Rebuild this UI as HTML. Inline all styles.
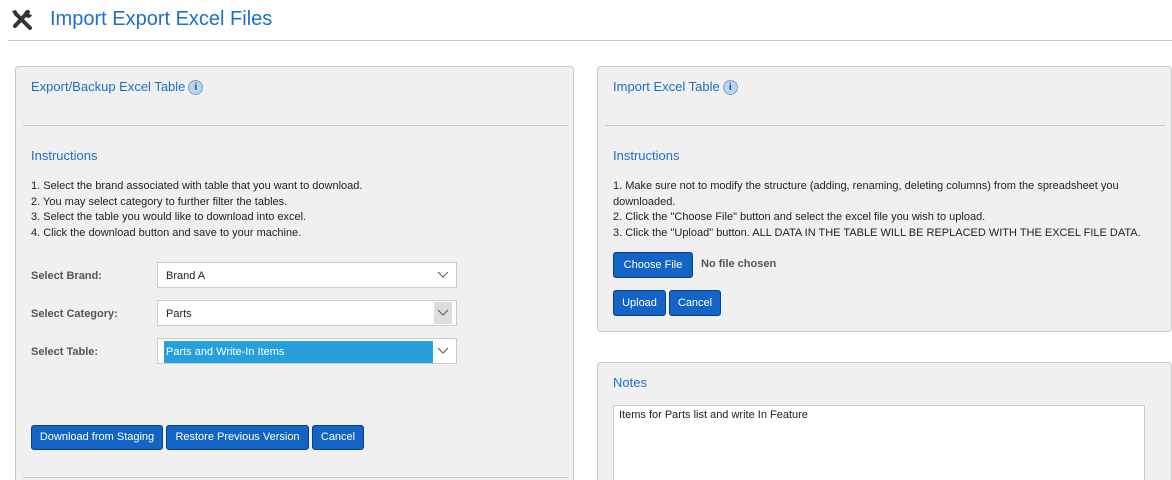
<!DOCTYPE html><html><head><style>
html,body{margin:0;width:1172px;height:480px;overflow:hidden}
body{background:#fff;font-family:"Liberation Sans",sans-serif;position:relative;font-size:11px;color:#222}
.a{position:absolute}
.h1{left:50px;top:8px;font-size:20px;color:#1e6fc7}
.hr{left:8px;top:40px;width:1164px;height:1px;background:#c8c8c8}
.panel{background:#f0f0f0;border:1px solid #c8c8c8;border-radius:4px;box-sizing:border-box}
.t{color:#1e6fc7;font-size:13px}
.line{height:1px;background:#c8c8c8}
.btn{background:#1364c4;border:1px solid #0a3f8a;border-radius:3px;color:#fff;font-size:11px;text-align:center;box-sizing:border-box}
.lbl{font-weight:bold;color:#555;font-size:11px}
.sel{background:#fff;border:1px solid #ccc;height:26px;box-sizing:border-box;width:300px;left:157px}
.txt{position:absolute;left:8px;top:7px}
.chev{position:absolute;right:7px;top:8px}
.info{display:inline-block;width:13px;height:13px;border-radius:50%;background:#bcd4ea;border:1px solid #7aa0c8;color:#1e4f8a;font-size:10px;font-weight:bold;text-align:center;line-height:13px;vertical-align:middle;margin-left:3px}
</style></head><body>
<svg class="a" style="left:10px;top:8px" width="24" height="24" viewBox="0 0 24 24"><path d="M6 6 L20 20" stroke="#333" stroke-width="4" stroke-linecap="round"/><path d="M18 4 L5 18" stroke="#333" stroke-width="4" stroke-linecap="round"/><path d="M2 3 L6 2 L8 6 L5 8 Z" fill="#333"/><path d="M17 2 A4 4 0 1 0 22 7 L19 6 Z" fill="#333"/></svg>
<div class="a h1">Import Export Excel Files</div>
<div class="a hr"></div>

<div class="a panel" style="left:15px;top:66px;width:559px;height:430px"></div>
<div class="a t" style="left:31px;top:79px">Export/Backup Excel Table<span class="info">i</span></div>
<div class="a line" style="left:23px;top:125px;width:545px"></div>
<div class="a t" style="left:31px;top:148px">Instructions</div>
<div class="a" style="left:31px;top:179px;line-height:15.5px">1. Select the brand associated with table that you want to download.<br>2. You may select category to further filter the tables.<br>3. Select the table you would like to download into excel.<br>4. Click the download button and save to your machine.</div>
<div class="a lbl" style="left:31px;top:270px">Select Brand:</div>
<div class="a lbl" style="left:31px;top:308px">Select Category:</div>
<div class="a lbl" style="left:31px;top:346px">Select Table:</div>
<svg width="0" height="0"></svg>
<div class="a sel" style="top:262px"><span class="txt">Brand A</span><svg class="chev" width="12" height="8" viewBox="0 0 12 8"><path d="M1 1 L6 6 L11 1" stroke="#555" fill="none"/></svg></div>
<div class="a sel" style="top:300px"><span class="txt">Parts</span><div class="a" style="right:4px;top:1px;width:18px;height:22px;background:#ddd"></div><svg class="chev" width="12" height="8" viewBox="0 0 12 8"><path d="M1 1 L6 6 L11 1" stroke="#555" fill="none"/></svg></div>
<div class="a sel" style="top:338px"><div class="a" style="left:6px;top:2px;width:269px;height:22px;background:#25a0dc"></div><span class="txt" style="color:#fff;top:7px">Parts and Write-In Items</span><svg class="chev" width="12" height="8" viewBox="0 0 12 8"><path d="M1 1 L6 6 L11 1" stroke="#555" fill="none"/></svg></div>
<div class="a btn" style="left:31px;top:425px;width:132px;height:25px;line-height:23px">Download from Staging</div>
<div class="a btn" style="left:166px;top:425px;width:143px;height:25px;line-height:23px">Restore Previous Version</div>
<div class="a btn" style="left:312px;top:425px;width:52px;height:25px;line-height:23px">Cancel</div>
<div class="a line" style="left:23px;top:477px;width:545px"></div>

<div class="a panel" style="left:597px;top:66px;width:575px;height:266px"></div>
<div class="a t" style="left:613px;top:79px">Import Excel Table<span class="info">i</span></div>
<div class="a line" style="left:605px;top:125px;width:560px"></div>
<div class="a t" style="left:613px;top:148px">Instructions</div>
<div class="a" style="left:613px;top:179px;line-height:15.5px">1. Make sure not to modify the structure (adding, renaming, deleting columns) from the spreadsheet you<br>downloaded.<br>2. Click the "Choose File" button and select the excel file you wish to upload.<br>3. Click the "Upload" button. ALL DATA IN THE TABLE WILL BE REPLACED WITH THE EXCEL FILE DATA.</div>
<div class="a btn" style="left:613px;top:252px;width:80px;height:26px;line-height:24px;font-size:11px">Choose File</div>
<div class="a" style="left:701px;top:258px;font-weight:bold;color:#555">No file chosen</div>
<div class="a btn" style="left:613px;top:290px;width:53px;height:26px;line-height:24px">Upload</div>
<div class="a btn" style="left:669px;top:290px;width:52px;height:26px;line-height:24px">Cancel</div>

<div class="a panel" style="left:597px;top:362px;width:575px;height:130px"></div>
<div class="a t" style="left:613px;top:375px">Notes</div>
<div class="a" style="left:613px;top:405px;width:530px;height:80px;background:#fff;border:1px solid #ccc"><div style="padding:3px 5px">Items for Parts list and write In Feature</div></div>
</body></html>
